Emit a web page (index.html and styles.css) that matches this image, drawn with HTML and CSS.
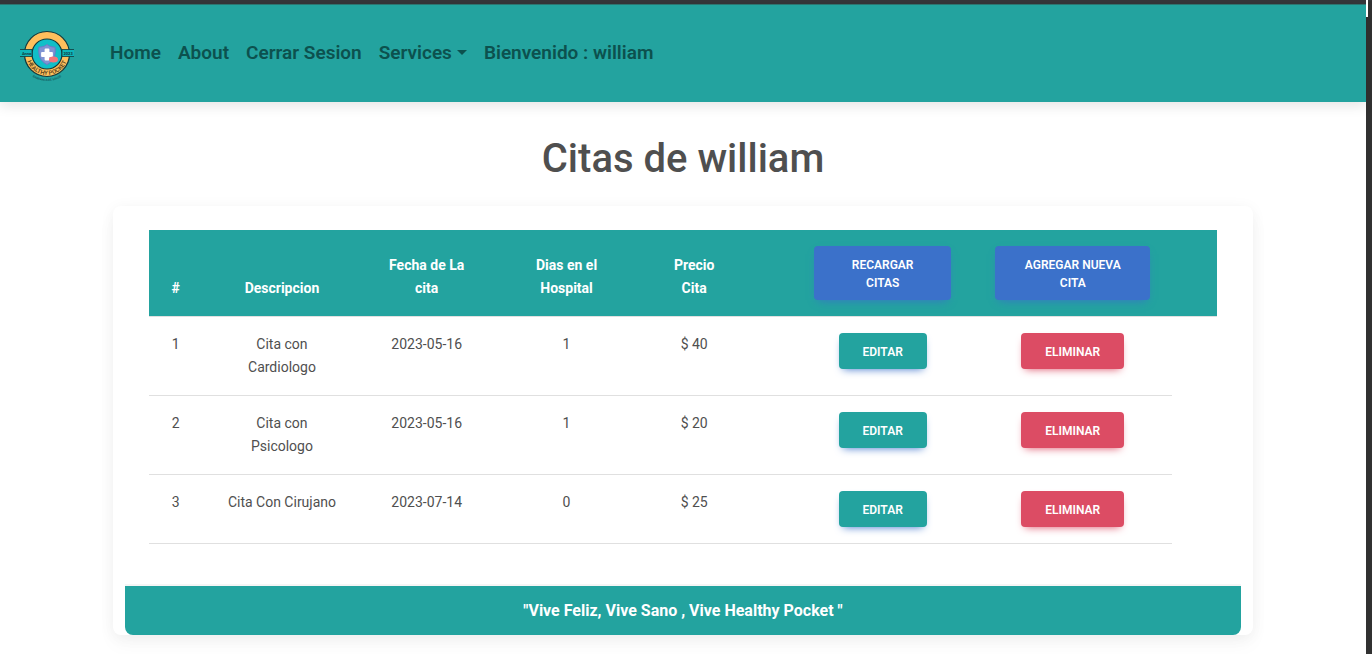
FILE: index.html
```html
<!DOCTYPE html>
<html lang="es">
<head>
<meta charset="utf-8">
<title>Healthy Pocket</title>
<link rel="stylesheet" href="styles.css">
</head>
<body>
<div class="window">
  <span class="thumb"></span>
  <header class="navbar">
    <a class="brand" href="#" aria-label="Healthy Pocket">
      <svg width="56" height="58" viewBox="0 0 56 58">
        <defs>
          <path id="arc-in" d="M7 29a21 21 0 0 0 42 0"/>
          <path id="arc-out" d="M1 29a27 27 0 0 0 54 0"/>
        </defs>
        <circle cx="28" cy="29" r="22.500" fill="#ffbf5c" stroke="#12383b" stroke-width="1.200"/>
        <circle cx="28" cy="29" r="15" fill="#10bfc8" stroke="#12383b" stroke-width="1.200"/>
        <path d="M1 24.500h12v7H1zM43 24.500h12v7H43z" fill="#0fb5b9"/>
        <path d="M1 24.500h12v7H1M55 24.500H43v7h12" fill="none" stroke="#12383b" stroke-width=".8"/>
        <path d="M28 19.500c2.500 2 5 2.600 8 2.600 1 8-1 14-8 17.400-7-3.400-9-9.400-8-17.400 3 0 5.500-.6 8-2.600z" fill="#7f93d3" stroke="#6a7cc8"/>
        <path d="M26.500 24.500h3v3.500h3.500v3h-3.500v3.500h-3v-3.500H23v-3h3.500z" fill="#fff" stroke="#fff" stroke-width="1.800" stroke-linejoin="round"/>
        <ellipse cx="34.500" cy="34.500" rx="4.500" ry="3" fill="#f47478"/>
        <text class="logo-year" x="3" y="29.500">Anno</text>
        <text class="logo-year" x="44.500" y="29.500">2023</text>
        <text class="logo-name"><textPath href="#arc-in" startOffset="50%" text-anchor="middle">HEALTHY POCKET</textPath></text>
        <text class="logo-tag"><textPath href="#arc-out" startOffset="50%" text-anchor="middle">BARRANCA DE SALUD</textPath></text>
      </svg>
    </a>
    <nav class="links">
      <a href="#">Home</a>
      <a href="#">About</a>
      <a href="#">Cerrar Sesion</a>
      <a class="dropdown" href="#">Services</a>
      <a href="#">Bienvenido : william</a>
    </nav>
  </header>
  <main class="content">
    <h1 class="title">Citas de william</h1>
    <section class="card">
      <div class="card-body">
        <table class="citas">
          <colgroup>
            <col class="c-id"><col class="c-desc"><col class="c-date"><col class="c-days"><col class="c-price"><col class="c-gap"><col class="c-edit"><col class="c-del"><col class="c-gap">
          </colgroup>
          <thead>
            <tr>
              <th>#</th><th>Descripcion</th><th>Fecha de La cita</th><th>Dias en el Hospital</th><th>Precio Cita</th><th></th>
              <th class="action"><button class="btn wide">Recargar Citas</button></th>
              <th class="action"><button class="btn wide">Agregar nueva cita</button></th>
              <th></th>
            </tr>
          </thead>
          <tbody>
            <tr><td>1</td><td>Cita con Cardiologo</td><td>2023-05-16</td><td>1</td><td>$ 40</td><td></td><td class="action"><button class="btn edit">Editar</button></td><td class="action"><button class="btn delete">Eliminar</button></td></tr>
            <tr><td>2</td><td>Cita con Psicologo</td><td>2023-05-16</td><td>1</td><td>$ 20</td><td></td><td class="action"><button class="btn edit">Editar</button></td><td class="action"><button class="btn delete">Eliminar</button></td></tr>
            <tr><td>3</td><td>Cita Con Cirujano</td><td>2023-07-14</td><td>0</td><td>$ 25</td><td></td><td class="action"><button class="btn edit">Editar</button></td><td class="action"><button class="btn delete">Eliminar</button></td></tr>
          </tbody>
        </table>
      </div>
      <footer class="card-footer">"Vive Feliz, Vive Sano , Vive Healthy Pocket "</footer>
    </section>
  </main>
</div>
</body>
</html>
```
FILE: styles.css
```css
* { box-sizing: border-box; }
body {
  margin: 0;
  background: #fff;
  color: #4f4f4f;
  font-family: Roboto, "Liberation Sans", sans-serif;
  font-size: 16px;
  line-height: 26px;
}
.window {
  position: relative;
  min-height: 100vh;
  border-top: 4px solid #35363a;
  border-right: 6px solid #313131;
}
.thumb {
  position: absolute;
  top: -4px;
  right: -2px;
  width: 2px;
  height: 17px;
  background: #fff;
}
.navbar {
  display: flex;
  align-items: center;
  gap: 35px;
  padding: 19px;
  border-top: 1px solid #2d7470;
  background: #23a39f;
  box-shadow: 0 4px 12px rgba(0, 0, 0, .1);
}
.brand { display: flex; padding-top: 1px; }
.logo-year { font: 700 4px Roboto, sans-serif; fill: #12383b; }
.logo-name { font: 600 6px Roboto, sans-serif; fill: #5a4320; }
.logo-tag { font: 700 3px Roboto, sans-serif; fill: #12605f; }
.links { display: flex; gap: 17px; padding-bottom: 2px; }
.links a {
  color: #0c514e;
  font-size: 19px;
  font-weight: 600;
  text-decoration: none;
}
.dropdown::after {
  content: "";
  display: inline-block;
  margin-left: 5px;
  vertical-align: 4px;
  border: 5px solid transparent;
  border-top-color: currentColor;
  border-bottom: 0;
}
.content {
  max-width: 1140px;
  margin: 0 auto;
}
.title {
  margin: 33px 0 23px;
  font-size: 40px;
  font-weight: 500;
  line-height: 48px;
  text-align: center;
}
.card {
  padding: 0 12px;
  border-radius: 8px;
  background: #fff;
  box-shadow: 0 2px 15px rgba(0, 0, 0, .05), 0 10px 20px rgba(0, 0, 0, .03);
}
.card-body { padding: 24px 24px 40px; }
.citas {
  width: 100%;
  table-layout: fixed;
  border-collapse: separate;
  border-spacing: 0;
  font-size: 14px;
  line-height: 23px;
  text-align: center;
}
.c-id { width: 5%; }
.c-desc { width: 14.9%; }
.c-date { width: 12.2%; }
.c-days { width: 14%; }
.c-price { width: 9.9%; }
.c-gap { width: 4.2%; }
.c-edit { width: 17%; }
.c-del { width: 18.6%; }
.citas th, .citas td {
  padding: 16px 24px;
  border-bottom: 1px solid #e0e0e0;
}
.citas th {
  background: #23a39f;
  background-clip: padding-box;
  color: #fff;
  font-weight: 700;
  vertical-align: bottom;
}
.citas td { vertical-align: top; }
.citas th:first-child, .citas td:first-child { padding: 16px; }
.citas .action { padding: 16px 22px; }
.btn {
  padding: 10px 24px 8px;
  border: 0;
  border-radius: 4px;
  color: #fff;
  font-family: inherit;
  font-size: 12px;
  font-weight: 600;
  line-height: 18px;
  text-transform: uppercase;
  vertical-align: top;
  cursor: pointer;
}
.wide {
  width: 100%;
  background: #3b71ca;
  box-shadow: 0 4px 9px -4px #3b71ca;
}
.edit {
  background: #23a39f;
  box-shadow: 0 4px 9px -4px #3b71ca;
}
.delete {
  background: #dc4c64;
  box-shadow: 0 4px 9px -4px #dc4c64;
}
.card-footer {
  padding: 12px 24px;
  border-top: 2px solid #f5f5f5;
  border-radius: 0 0 8px 8px;
  background: #23a39f;
  color: #fff;
  font-weight: 700;
  line-height: 25px;
  text-align: center;
}
```
